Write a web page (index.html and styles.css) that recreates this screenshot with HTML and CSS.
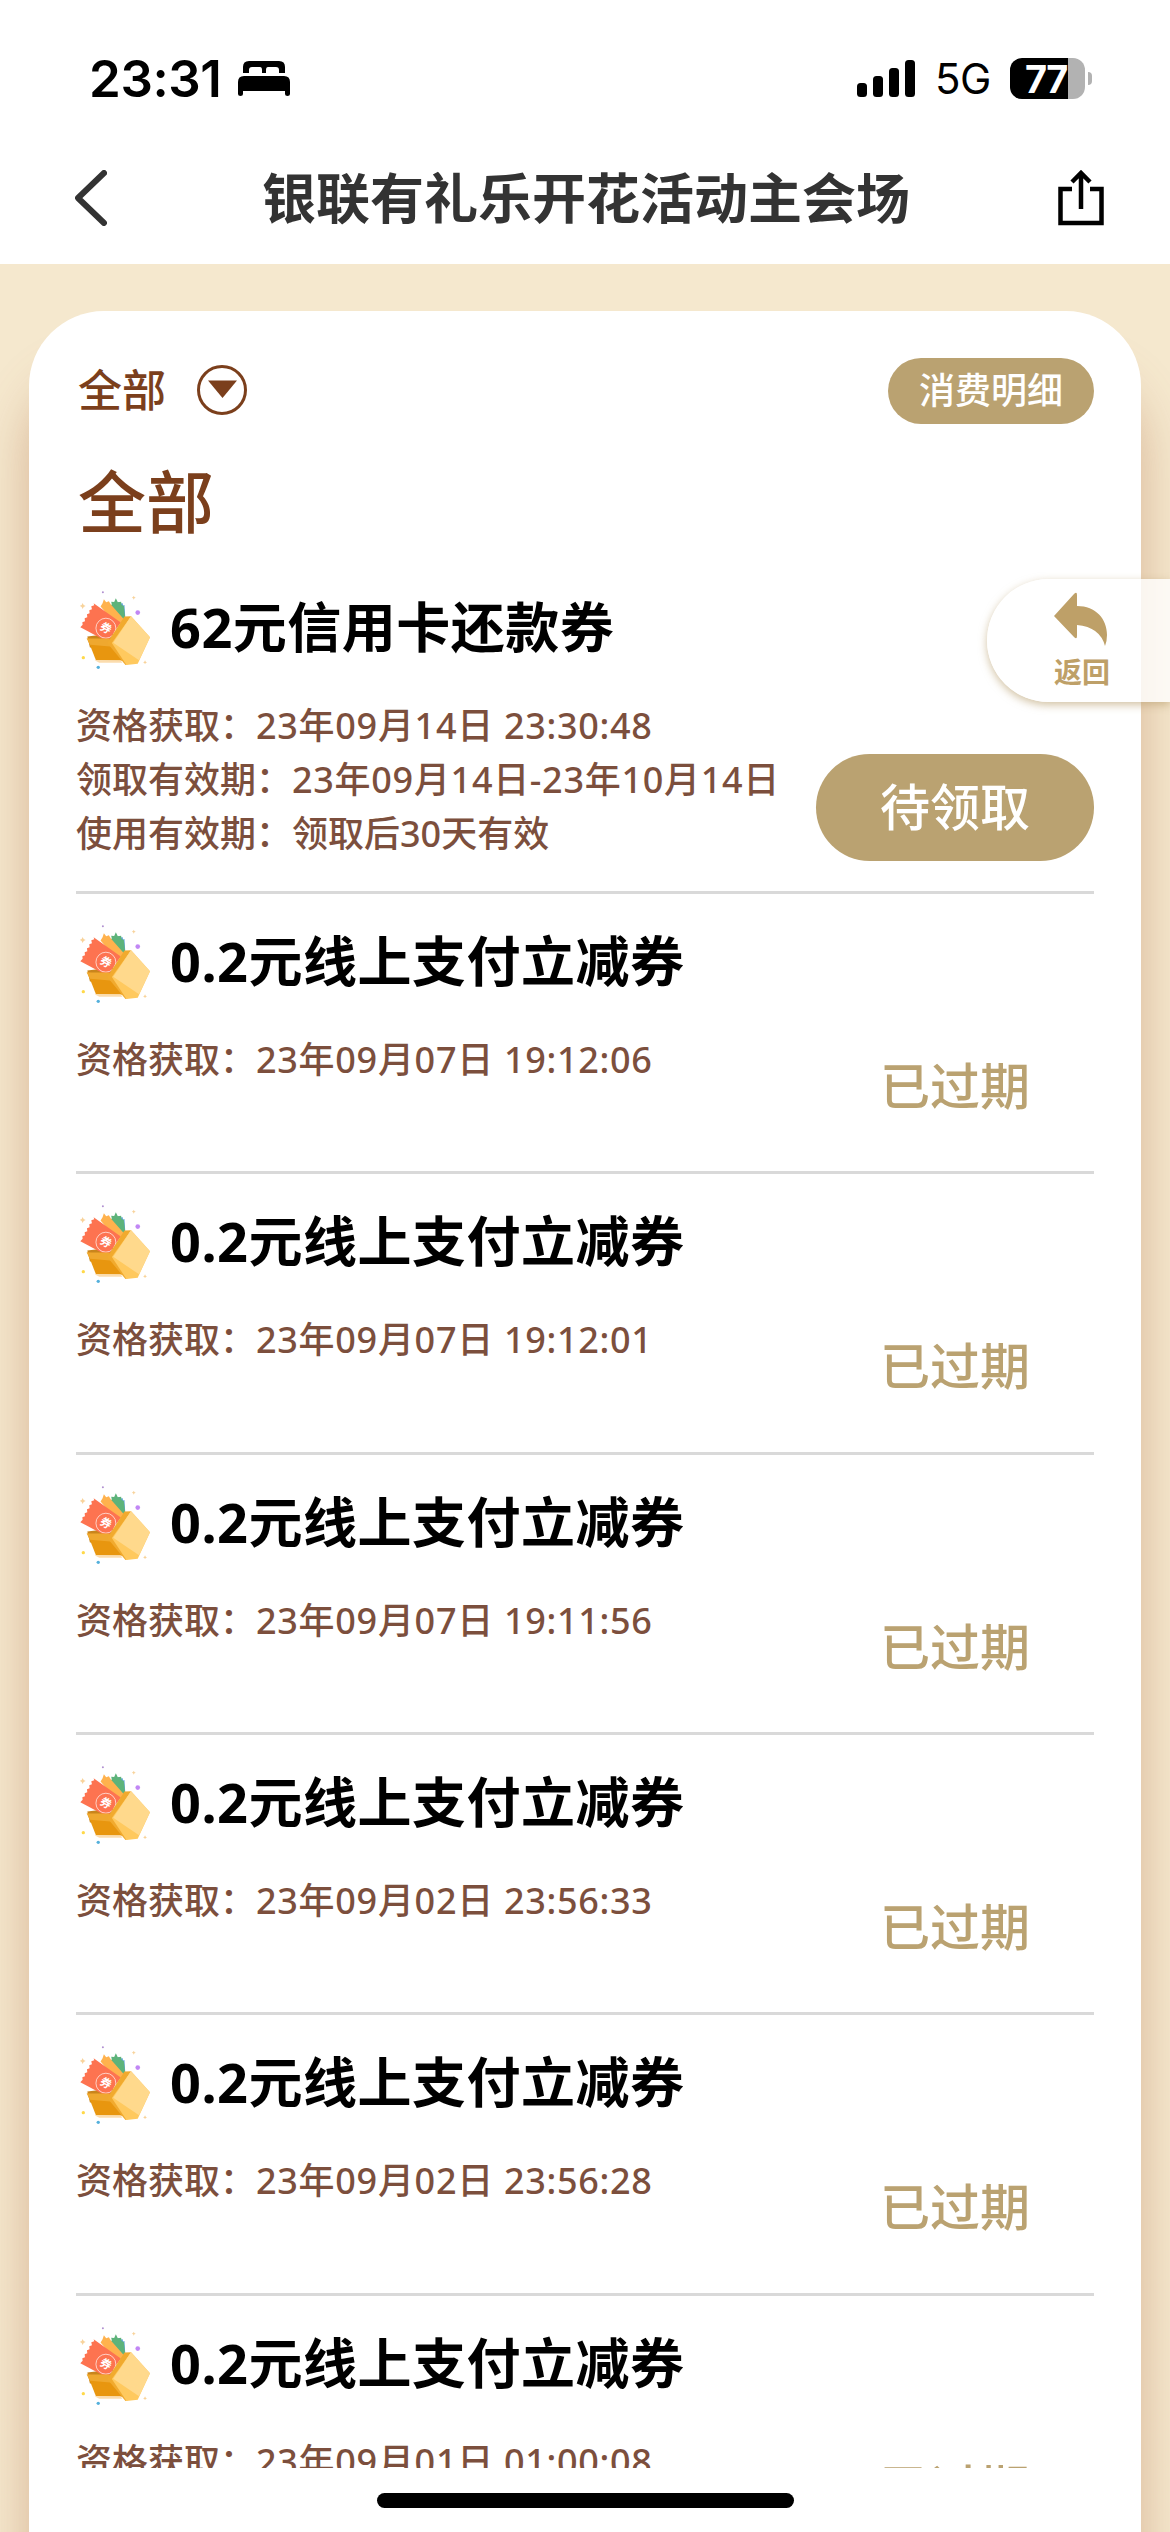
FILE: index.html
```html
<!DOCTYPE html>
<html lang="zh-CN">
<head>
<meta charset="utf-8">
<title>银联有礼乐开花活动主会场</title>
<link rel="stylesheet" href="styles.css">
</head>
<body>
<svg class="defs" width="0" height="0" aria-hidden="true">
  <symbol id="coupon-box" viewBox="60 45 220 245">
    <path d="M166 92l10-6 4 6 8-3 2 8 4-2 3 46-20 4z" fill="#5fa3d9"/>
    <path d="M148 98l8-4-2-9 9 1 5-11 6 12 10-2 1 10 7 3 4 38-18 12z" fill="#5db37a"/>
    <path d="M122 100l6-10 4-12 7 9 8-3 6 10 40 45-20 20z" fill="#ffb24d"/>
    <path d="M82 190l80-10-10 40-62 3z" fill="#c9851c"/>
    <path d="M101 90l82 58-40 58-82-44 7-7-1-8 8-3-1-9 8-3-1-9 8-3-1-9 8-3-2-9 9-3z" fill="#fd7350"/>
    <circle cx="138" cy="165" r="30" fill="none" stroke="#fff" stroke-width="2"/>
    <text class="coupon-mark" x="138" y="177" transform="rotate(30 138 165)">券</text>
    <path d="M82 195l66 12 58 56-98-1z" fill="#e8960f"/>
    <path d="M80 196h68l20 26-78-7z" fill="#efa82f"/>
    <path d="M104 262h78l6 7h-70z" fill="#fbdcae"/>
    <path d="M142 210l52-80 20-1-54 83 44 62-7 2z" fill="#f1aa2e"/>
    <path d="M214 129l57 63-37 80-34 4-44-66z" fill="#ffc95e"/>
    <path d="M214 129l57 63-33 70-78-53z" fill="#ffd98c"/>
    <path d="M68 89l3 6 6 3-6 3-3 6-3-6-6-3 6-3z" fill="#f8d39b"/>
    <path d="M222 67l2 4 4 2-4 2-2 4-2-4-4-2 4-2zM256 262l2 4 4 2-4 2-2 4-2-4-4-2 4-2z" fill="#f8d39b"/>
    <circle cx="129" cy="57" r="3" fill="#b08fd0"/>
    <circle cx="234" cy="118" r="7" fill="#c187f5"/>
    <circle cx="70" cy="254" r="5" fill="#ffd94a"/>
    <circle cx="115" cy="283" r="5" fill="#54b0dc"/>
  </symbol>
</svg>

<header class="top">
  <div class="status-bar">
    <div class="clock">23:31</div>
    <svg class="bed" viewBox="0 0 52 36"><path d="M5 13V7q0-6 6-6h30q6 0 6 6v6h-6v-3q0-3-3-3h-8q-2 0-2 3v3h-4v-3q0-3-2-3h-8q-3 0-3 3v3z"/><path d="M0 22q0-6 6-6h40q6 0 6 6v12q0 2-2.500 2T47 34v-3H5v3q0 2-2.500 2T0 34z"/></svg>
    <svg class="signal" viewBox="0 0 58 37"><rect y="23" width="10" height="14" rx="3.500"/><rect x="16" y="16" width="10" height="21" rx="3.500"/><rect x="32" y="8" width="10" height="29" rx="3.500"/><rect x="48" width="10" height="37" rx="3.500"/></svg>
    <div class="network">5G</div>
    <div class="battery"><span>77</span></div>
    <div class="battery-tip"></div>
  </div>
  <nav class="nav-bar">
    <svg class="back" viewBox="0 0 32 56"><path d="M29 3L3 28l26 25"/></svg>
    <h1>银联有礼乐开花活动主会场</h1>
    <svg class="share" viewBox="0 0 46 58"><path d="M14 20H2.500v34h41V20H32M23 40V4M14 13l9-9 9 9"/></svg>
  </nav>
</header>

<main class="page">
  <section class="card">
    <div class="filter">
      <span>全部</span>
      <svg class="drop" viewBox="0 0 50 50"><circle cx="25" cy="25" r="23.500"/><path d="M11 15.500h29L25.500 33z"/></svg>
      <button class="detail">消费明细</button>
    </div>
    <h2>全部</h2>
    <ul class="list">
      <li class="item">
        <div class="name"><svg><use href="#coupon-box"/></svg><h3>62元信用卡还款券</h3></div>
        <div class="body"><p>资格获取：<span>23年09月14日 23:30:48</span><br>领取有效期：<span>23年09月14日-23年10月14日</span><br>使用有效期：领取后30天有效</p><button class="claim">待领取</button></div>
      </li>
      <li class="item">
        <div class="name"><svg><use href="#coupon-box"/></svg><h3>0.2元线上支付立减券</h3></div>
        <div class="body"><p>资格获取：<span>23年09月07日 19:12:06</span></p><div class="expired">已过期</div></div>
      </li>
      <li class="item">
        <div class="name"><svg><use href="#coupon-box"/></svg><h3>0.2元线上支付立减券</h3></div>
        <div class="body"><p>资格获取：<span>23年09月07日 19:12:01</span></p><div class="expired">已过期</div></div>
      </li>
      <li class="item">
        <div class="name"><svg><use href="#coupon-box"/></svg><h3>0.2元线上支付立减券</h3></div>
        <div class="body"><p>资格获取：<span>23年09月07日 19:11:56</span></p><div class="expired">已过期</div></div>
      </li>
      <li class="item">
        <div class="name"><svg><use href="#coupon-box"/></svg><h3>0.2元线上支付立减券</h3></div>
        <div class="body"><p>资格获取：<span>23年09月02日 23:56:33</span></p><div class="expired">已过期</div></div>
      </li>
      <li class="item">
        <div class="name"><svg><use href="#coupon-box"/></svg><h3>0.2元线上支付立减券</h3></div>
        <div class="body"><p>资格获取：<span>23年09月02日 23:56:28</span></p><div class="expired">已过期</div></div>
      </li>
      <li class="item">
        <div class="name"><svg><use href="#coupon-box"/></svg><h3>0.2元线上支付立减券</h3></div>
        <div class="body"><p>资格获取：<span>23年09月01日 01:00:08</span></p><div class="expired">已过期</div></div>
      </li>
    </ul>
  </section>
</main>

<aside class="return">
  <svg viewBox="0 0 53 54"><path d="M0 24L20 2q3-3 3 1v11c19 0 30 13 30 29q0 6-2 11-5-19-28-21v11q0 4-3 1z"/></svg>
  <span>返回</span>
</aside>
<div class="home-indicator"></div>
</body>
</html>
```

FILE: styles.css
```css
* { box-sizing: border-box; margin: 0; padding: 0; }

body {
  position: relative;
  width: 1170px;
  height: 2532px;
  overflow: hidden;
  display: flex;
  flex-direction: column;
  background: #f5e8ce;
  font-family: "Noto Sans", "Noto Sans CJK SC", sans-serif;
  font-weight: 500;
}

button { border: 0; font: inherit; color: #fff; background: #baa271; }

.defs { position: absolute; }
.coupon-mark { font: 700 34px "Noto Sans CJK SC", sans-serif; text-anchor: middle; fill: #fff; }

/* status bar and title bar */
.top { flex: none; height: 264px; background: #fff; }

.status-bar {
  height: 134px;
  padding: 22px 78px 0 89px;
  display: flex;
  align-items: center;
  font-family: Inter, sans-serif;
  font-weight: 400;
  color: #000;
}
.clock { width: 149px; font-size: 51px; font-weight: 600; letter-spacing: -0.4px; }
.bed { width: 52px; height: 36px; }
.signal { width: 58px; height: 37px; margin-left: auto; }
.network { width: 95px; padding-left: 20px; font-size: 42px; letter-spacing: -0.5px; }
.battery {
  width: 75px;
  height: 41px;
  border-radius: 12px;
  background: linear-gradient(90deg, #000 58px, #b2b2b2 58px);
  color: #fff;
  font-size: 38px;
  font-weight: 700;
  line-height: 42px;
  padding-left: 15px;
  letter-spacing: -1.5px;
}
.battery-tip { width: 4px; height: 13px; margin-left: 3px; border-radius: 0 5px 5px 0; background: #b2b2b2; }

.nav-bar { height: 128px; padding: 0 66px 0 75px; display: flex; align-items: center; justify-content: space-between; }
.back { width: 32px; height: 56px; fill: none; stroke: #333; stroke-width: 6; stroke-linecap: round; stroke-linejoin: round; }
.nav-bar h1 { font: 700 54px/80px "Noto Sans CJK SC", sans-serif; color: #333; padding: 0 0 4px 7px; }
.share { width: 46px; height: 58px; fill: none; stroke: #000; stroke-width: 4.500; }

/* coupon card */
.page { flex: 1; padding: 47px 29px 0; overflow: hidden; }
.card {
  height: 2300px;
  padding: 47px 47px 0;
  border-radius: 75px;
  background: #fff;
  box-shadow: 0 66px 50px rgba(175, 108, 68, 0.42);
}
.filter { height: 66px; padding-bottom: 3px; display: flex; align-items: center; color: #7b3f1c; }
.filter span { font-size: 44px; line-height: 66px; width: 121px; padding-left: 2px; }
.drop { width: 50px; height: 50px; fill: #7b3f1c; }
.drop circle { fill: none; stroke: #7b3f1c; stroke-width: 3; }
.detail { align-self: flex-start; flex: none; margin-left: auto; width: 206px; height: 66px; border-radius: 33px; font-size: 36px; line-height: 62px; }
.card h2 { height: 135.5px; padding: 30px 0 0 2px; font-size: 68px; line-height: 96px; font-weight: 500; color: #7b3f1c; }

/* the list stops above the home indicator */
.list { height: 1908.5px; overflow: hidden; list-style: none; }
.item { padding-top: 23px; padding-bottom: 30.4px; border-bottom: 3px solid #d9d9d9; }
.name { height: 92px; margin-bottom: 24px; display: flex; align-items: center; }
.name svg { width: 73px; height: 82px; margin-left: 4px; }
.name h3 { margin-left: 17px; padding-bottom: 4px; font-size: 54px; line-height: 80px; font-weight: 700; letter-spacing: 0.5px; color: #000; }
.body { display: flex; justify-content: space-between; align-items: flex-start; }
.body p { font-size: 36px; line-height: 54px; color: #7c4f3d; white-space: nowrap; }
.body p span { letter-spacing: 0.7px; }
.claim { flex: none; align-self: flex-end; width: 278px; height: 107px; border-radius: 54px; font-size: 50px; line-height: 101px; }
.expired { width: 278px; height: 108px; text-align: center; font-size: 50px; line-height: 107px; color: #baa271; }

/* floating return tab */
.return {
  position: absolute;
  right: 0;
  top: 579px;
  width: 183px;
  height: 123px;
  padding: 13px 0 0 67px;
  border-radius: 62px 0 0 62px;
  background: rgba(255, 255, 255, 0.8);
  box-shadow: 0 3px 8px rgba(186, 162, 113, 0.65);
}
.return svg { display: block; width: 53px; height: 54px; fill: #bea068; }
.return span { display: block; margin-top: 7px; font-size: 28px; line-height: 38px; font-weight: 700; color: #bea068; }

.home-indicator { position: absolute; left: 377px; top: 2493px; width: 417px; height: 15px; border-radius: 8px; background: #000; }
```
